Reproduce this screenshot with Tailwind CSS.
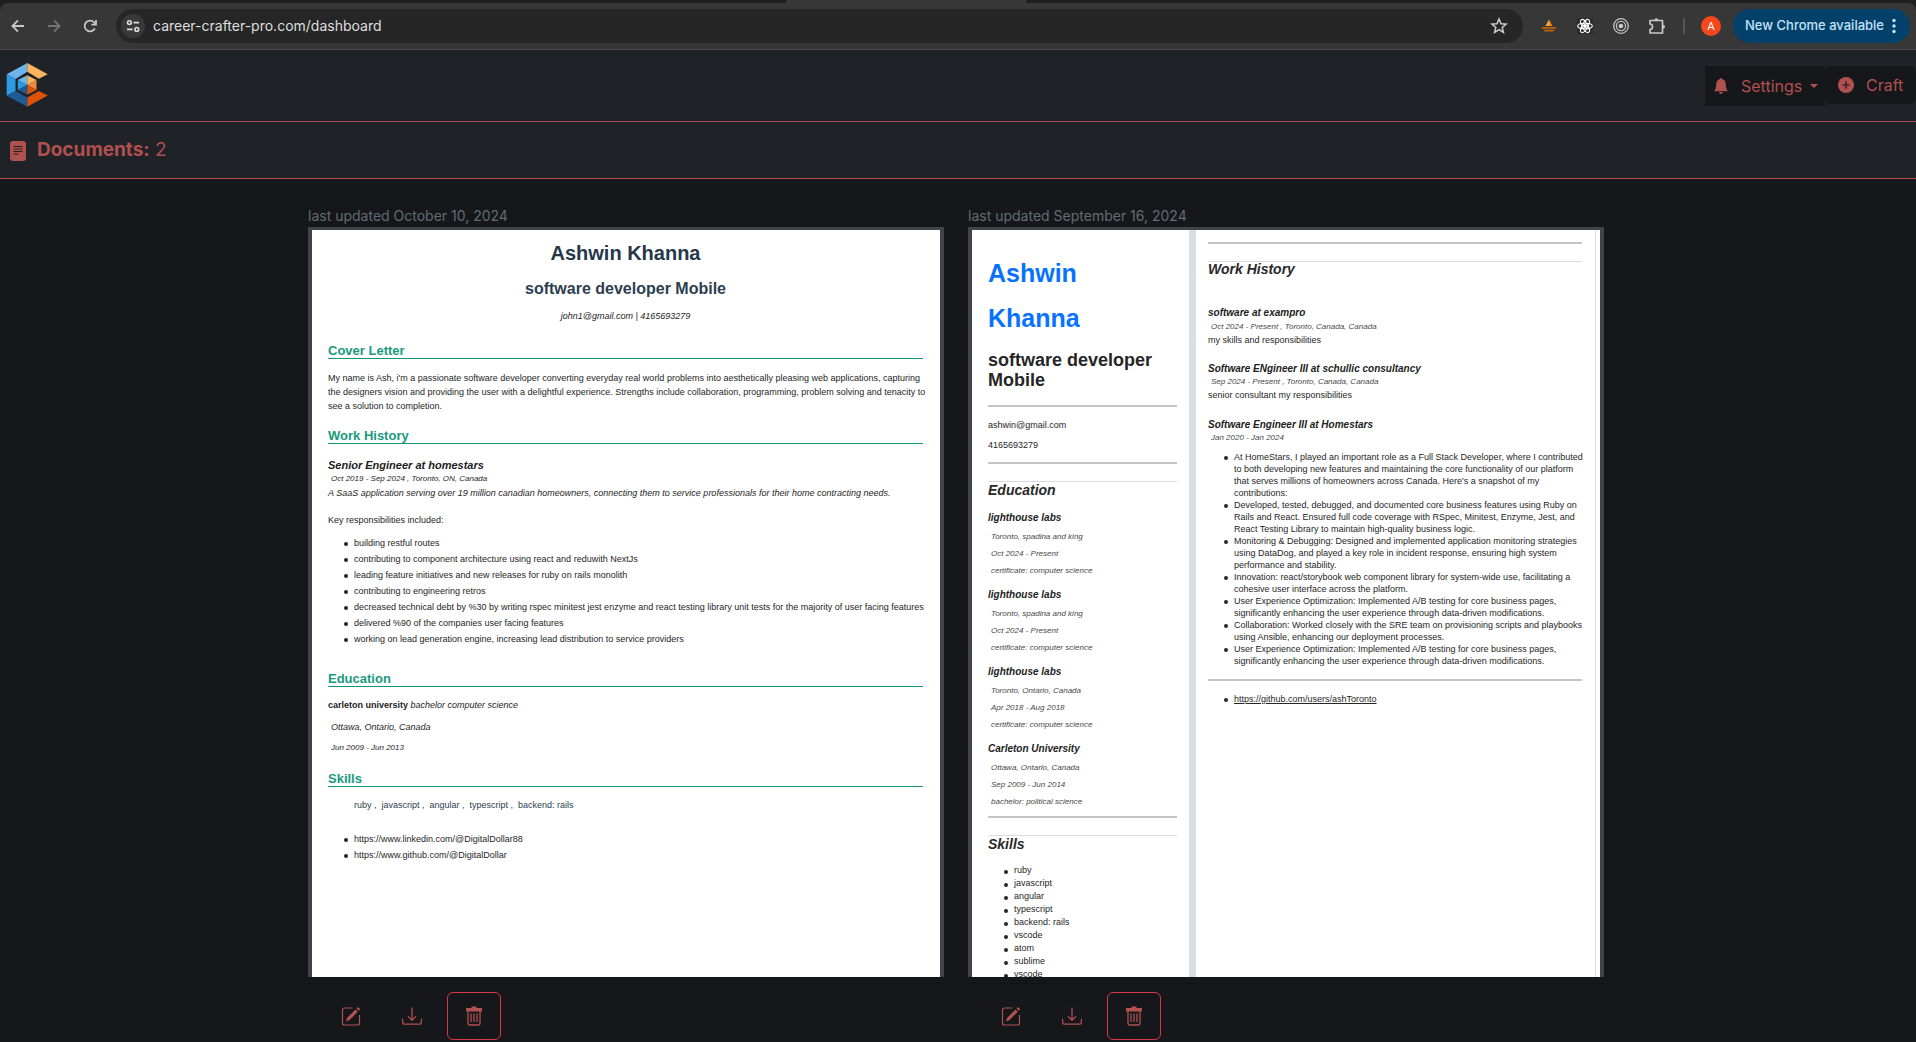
<!DOCTYPE html>
<html lang="en">
<head>
<meta charset="utf-8">
<meta name="viewport" content="width=device-width, initial-scale=1">
<title>Career Crafter Pro – Dashboard</title>
<script src="https://cdn.jsdelivr.net/npm/@tailwindcss/browser@4"></script>
</head>
<body class="min-h-screen bg-[#16171a] font-['Inter',sans-serif] text-[#b0504f]">

<!-- Browser toolbar -->
<div class="bg-[#1f1f1f]">
  <div class="flex h-[3px] justify-center"><div class="mr-[104px] h-[3px] w-[240px] bg-[#373737]"></div></div>
  <div class="flex h-[47px] items-center rounded-t-lg border-b border-[#474747] bg-[#373737] pr-[6px] pl-[8px]">
    <div class="flex gap-4 text-[#c7c7c7]">
      <button aria-label="Back" class="flex size-5 items-center justify-center"><svg class="size-[14px]" viewBox="0 0 14 14" fill="none" stroke="currentColor" stroke-width="1.8"><path d="M13 7H2M7 1.3 1.4 7 7 12.7"/></svg></button>
      <button aria-label="Forward" class="flex size-5 items-center justify-center text-[#737373]"><svg class="size-[14px]" viewBox="0 0 14 14" fill="none" stroke="currentColor" stroke-width="1.8"><path d="M1 7h11M7 1.3 12.6 7 7 12.7"/></svg></button>
      <button aria-label="Reload" class="flex size-5 items-center justify-center"><svg class="size-[14px]" viewBox="0 0 14 14" fill="none" stroke="currentColor" stroke-width="1.8"><path d="M11.9 9.3A5.4 5.4 0 1 1 10.9 3.2L12.6 5"/><path d="M13 1v4.6H8.4"/></svg></button>
    </div>
    <div class="ml-4 flex h-[34px] flex-1 items-center rounded-full bg-[#262626] pr-[14px] pl-[5px]">
      <button aria-label="Site information" class="flex size-6 items-center justify-center rounded-full bg-[#393939] text-[#dcdcdc]"><svg class="size-[14px]" viewBox="0 0 14 14" fill="none" stroke="currentColor" stroke-width="1.6"><circle cx="3.4" cy="3.6" r="1.9"/><path d="M7.5 3.6H13M1 10.4h5.5"/><circle cx="10.8" cy="10.4" r="1.9"/></svg></button>
      <input aria-label="Address" value="career-crafter-pro.com/dashboard" class="ml-2 min-w-0 flex-1 bg-transparent text-sm text-[#dedede] outline-none">
      <button aria-label="Bookmark this tab" class="text-[#cfcfcf]"><svg class="size-5" viewBox="0 0 20 20" fill="none" stroke="currentColor" stroke-width="1.5"><path d="m10 3 2 4.7 5.1.4-3.9 3.3 1.2 5L10 13.7l-4.4 2.7 1.2-5L2.900 8.100l5.100-.4z"/></svg></button>
    </div>
    <div class="ml-4 flex items-center gap-4">
      <button aria-label="Sailing extension" class="flex size-5 items-center justify-center"><svg class="size-4" viewBox="0 0 16 16"><path d="M8 1.500v6.500H4.500z" fill="#f7a83e"/><path d="M8 1.500v6.500h3.500z" fill="#ee8a18"/><path d="M.5 9h15l-.5 1.800H1zM2.500 11.800h11l-.8 1.700H3.300z" fill="#b8610f"/></svg></button>
      <button aria-label="React developer tools" class="flex size-5 items-center justify-center"><svg class="size-4 bg-[#2c2c2c]" viewBox="0 0 16 16" fill="none" stroke="#fff" stroke-width="1.100"><ellipse cx="8" cy="8" rx="7.300" ry="2.800"/><ellipse cx="8" cy="8" rx="7.300" ry="2.800" transform="rotate(60 8 8)"/><ellipse cx="8" cy="8" rx="7.300" ry="2.800" transform="rotate(120 8 8)"/><circle cx="8" cy="8" r="1.400" fill="#fff"/></svg></button>
      <button aria-label="Target extension" class="flex size-5 items-center justify-center"><svg class="size-4" viewBox="0 0 16 16" fill="none" stroke="#c2c2c2" stroke-width="1.300"><circle cx="8" cy="8" r="7.300"/><circle cx="8" cy="8" r="4.600"/><circle cx="8" cy="8" r="1.700" fill="#d6d6d6"/></svg></button>
      <button aria-label="Extensions" class="flex size-5 items-center justify-center"><svg class="size-[18px]" viewBox="0 0 18 18"><path d="M2 3.500h12.500v12.500H2v-3.500c3.400-.3 3.400-5.200 0-5.500z" fill="none" stroke="#c7c7c7" stroke-width="1.700" stroke-linejoin="round"/><path d="M6.300 3.300a2 2 0 0 1 4 0zM15 7.700a2 2 0 0 1 0 4z" fill="#c7c7c7"/></svg></button>
    </div>
    <div class="ml-4 h-4 w-[2px] bg-[#565656]"></div>
    <button aria-label="Profile" class="ml-4 flex size-5 items-center justify-center rounded-full bg-[#f4471b] text-[11px] text-white">A</button>
    <button class="ml-3 flex h-[34px] items-center gap-2 rounded-full bg-[#03416b] pr-[14px] pl-3 text-[13px] font-medium text-[#c2e4fb]">New Chrome available
      <svg class="h-4 w-1" viewBox="0 0 4 16" fill="currentColor"><circle cx="2" cy="2.500" r="1.700"/><circle cx="2" cy="8" r="1.700"/><circle cx="2" cy="13.500" r="1.700"/></svg></button>
  </div>
</div>

<!-- App navigation -->
<header class="flex h-[72px] items-start justify-between border-b border-[#a84c4c] bg-[#1f2226]">
  <a href="#" aria-label="Career Crafter home" class="mt-[13px] ml-[6px]"><svg class="h-11 w-[42px]" viewBox="18 188 126 134"><path d="m82 188-63 34 27 15 36-22z" fill="#6cb5e9"/><path d="m82 188 62 34-27 14-35-21z" fill="#fbb55e"/><path d="m19 222 27 15v36l-27 15z" fill="#2d9be2"/><path d="m19 288 27-15 36 20v28z" fill="#1d5b97"/><path d="m82 293 35-20 27 14-62 34z" fill="#dc5307"/><path d="M82 225v30l-29-15z" fill="#6cb5e9"/><path d="m82 225 28 15-28 15z" fill="#fbb55e"/><path d="m53 240 29 15-29 15z" fill="#2d9be2"/><path d="m110 240v30l-28-15z" fill="#f0893c"/><path d="m53 270 29-15v30z" fill="#1d5b97"/><path d="m110 270-28-15v30z" fill="#dc5307"/></svg></a>
  <nav class="mt-4 flex items-start">
    <button class="flex h-10 w-[120px] items-center bg-[#16171a] pl-2">
      <svg class="size-4" viewBox="0 0 16 17" fill="currentColor"><path d="M8 0a1.200 1.200 0 0 1 1.200 1.100C11.700 1.700 13 3.700 13 6.200c0 4 1 6.400 2.300 7.800H.7C2 12.600 3 10.200 3 6.200c0-2.500 1.300-4.500 3.800-5.100A1.200 1.200 0 0 1 8 0zM6 14.900h4a2 2 0 0 1-4 0z"/></svg>
      <span class="ml-3 text-base">Settings</span>
      <svg class="ml-2 h-1 w-2" viewBox="0 0 8 4" fill="currentColor"><path d="M0 0h8L4 4z"/></svg>
    </button>
    <button class="flex h-[38px] w-[91px] items-center rounded-md bg-[#16171a] pl-[13px]">
      <svg class="size-4" viewBox="0 0 16 16"><circle cx="8" cy="8" r="8" fill="currentColor"/><path d="M8 4.300v7.400M4.300 8h7.400" stroke="#16171a" stroke-width="1.200"/></svg>
      <span class="ml-3 text-base">Craft</span>
    </button>
  </nav>
</header>

<div class="flex h-[57px] items-center border-b border-[#b8494d] bg-[#1f2226] pt-px pl-[10px]">
  <svg class="h-5 w-4" viewBox="0 0 16 20"><rect width="16" height="20" rx="3" fill="currentColor"/><path d="M3.500 5.500h9M3.500 8h9M3.500 10.500h9M3.500 13h5" stroke="#1f2226" stroke-width="1.100"/></svg>
  <h1 class="ml-[11px] text-[19px]"><strong class="font-bold">Documents:</strong> 2</h1>
</div>

<main class="pt-[26px] pr-1">
  <div class="mx-auto grid max-w-[1320px] grid-cols-2 gap-6 px-3">

    <!-- Document 1 -->
    <section>
      <p class="text-sm leading-[22px] text-[#646b72]">last updated October 10, 2024</p>
      <article class="h-[750px] overflow-hidden border-x-4 border-t-[3px] border-[#404347] bg-white pt-[11px] pr-[17px] pl-4 font-['Liberation_Sans',Arial,sans-serif] text-[9px] leading-[14px] text-[#262626]">
        <header class="text-center">
          <h2 class="text-xl leading-6 font-bold text-[#26374a]">Ashwin Khanna</h2>
          <p class="mt-[14px] text-base leading-5 font-bold text-[#2c3e50]">software developer Mobile</p>
          <p class="mt-[10px] italic">john1@gmail.com | 4165693279</p>
        </header>
        <h3 class="mt-5 border-b border-[#16967a] text-[13px] leading-[15px] font-bold text-[#189a7e]">Cover Letter</h3>
        <p class="mt-3 -mr-2">My name is Ash, i'm a passionate software developer converting everyday real world problems into aesthetically pleasing web applications, capturing the designers vision and providing the user with a delightful experience. Strengths include collaboration, programming, problem solving and tenacity to see a solution to completion.</p>
        <h3 class="mt-[15px] border-b border-[#16967a] text-[13px] leading-[15px] font-bold text-[#189a7e]">Work History</h3>
        <h4 class="mt-[14px] text-[11px] leading-[14px] font-bold text-[#222] italic">Senior Engineer at homestars</h4>
        <p class="mt-px pl-[3px] text-[8px] leading-3 italic">Oct 2019 - Sep 2024 , Toronto, ON, Canada</p>
        <p class="mt-px italic">A SaaS application serving over 19 million canadian homeowners, connecting them to service professionals for their home contracting needs.</p>
        <p class="mt-[13px]">Key responsibilities included:</p>
        <ul class="mt-2 pl-[26px] leading-4 whitespace-nowrap [&>li]:relative [&>li]:before:absolute [&>li]:before:top-[7px] [&>li]:before:-left-[10px] [&>li]:before:size-1 [&>li]:before:rounded-full [&>li]:before:bg-[#262626]">
          <li>building restful routes</li>
          <li>contributing to component architecture using react and reduwith NextJs</li>
          <li>leading feature initiatives and new releases for ruby on rails monolith</li>
          <li>contributing to engineering retros</li>
          <li>decreased technical debt by %30 by writing rspec minitest jest enzyme and react testing library unit tests for the majority of user facing features</li>
          <li>delivered %90 of the companies user facing features</li>
          <li>working on lead generation engine, increasing lead distribution to service providers</li>
        </ul>
        <h3 class="mt-6 border-b border-[#16967a] text-[13px] leading-[15px] font-bold text-[#189a7e]">Education</h3>
        <p class="mt-[11px]"><b class="text-[#222]">carleton university</b> <i>bachelor computer science</i></p>
        <p class="mt-2 pl-[3px] italic">Ottawa, Ontario, Canada</p>
        <p class="mt-2 pl-[3px] text-[8px] leading-3 italic">Jun 2009 - Jun 2013</p>
        <h3 class="mt-[17px] border-b border-[#16967a] text-[13px] leading-[15px] font-bold text-[#189a7e]">Skills</h3>
        <p class="mt-[11px] flex gap-[5px] pl-[26px] text-[#2c3e50]"><span>ruby ,</span><span>javascript ,</span><span>angular ,</span><span>typescript ,</span><span>backend: rails</span></p>
        <ul class="mt-[19px] pl-[26px] leading-4 [&>li]:relative [&>li]:before:absolute [&>li]:before:top-[7px] [&>li]:before:-left-[10px] [&>li]:before:size-1 [&>li]:before:rounded-full [&>li]:before:bg-[#262626]">
          <li><a href="#">https://www.linkedin.com/@DigitalDollar88</a></li>
          <li><a href="#">https://www.github.com/@DigitalDollar</a></li>
        </ul>
      </article>
      <footer class="mt-[6px] flex gap-2 border-t border-[#121316] pt-2 pb-[2px] pl-[15px]">
        <button aria-label="Edit" class="flex h-12 w-[54px] items-center justify-center rounded-md pb-px pl-[2px]"><svg class="size-5" viewBox="0 0 20 20" fill="none" stroke="currentColor"><path d="M11.500 2H3.500A2 2 0 0 0 1.500 4v13a2 2 0 0 0 2 2h13a2 2 0 0 0 2-2V9" stroke-width="1.200"/><path d="M5 15.500 6 12l8.500-8.500 2.300 2.300L8.300 14.300z" fill="currentColor" stroke="none"/><path d="m15.500 2.500 1.500-1.500 2.300 2.300-1.500 1.500z" fill="currentColor" stroke="none"/></svg></button>
        <button aria-label="Download" class="flex h-12 w-[54px] items-center justify-center rounded-md pb-px"><svg class="size-5" viewBox="0 0 16 16" fill="currentColor"><path d="M.5 9.900a.5.5 0 0 1 .5.5v2.500a1 1 0 0 0 1 1h12a1 1 0 0 0 1-1v-2.500a.5.5 0 0 1 1 0v2.500a2 2 0 0 1-2 2H2a2 2 0 0 1-2-2v-2.500a.5.5 0 0 1 .5-.5"/><path d="M7.646 11.854a.5.5 0 0 0 .708 0l3-3a.5.5 0 0 0-.708-.708L8.500 10.293V1.500a.5.5 0 0 0-1 0v8.793L5.354 8.146a.5.5 0 1 0-.708.708z"/></svg></button>
        <button aria-label="Delete" class="flex h-12 w-[54px] items-center justify-center rounded-md border border-[#dc3545] pb-px"><svg class="h-5 w-4" viewBox="0 0 16 20" fill="none" stroke="currentColor"><path d="M5.500 .5h5V2H16v3.500H0V2h5.500z" fill="currentColor" stroke="none"/><path d="M2 5v12a2 2 0 0 0 2 2h8a2 2 0 0 0 2-2V5" stroke-width="1.300"/><path d="M5 7.500v8.500M8 7.500v8.500M11 7.500v8.500" stroke-width="1.300"/></svg></button>
      </footer>
    </section>

    <!-- Document 2 -->
    <section>
      <p class="text-sm leading-[22px] text-[#646b72]">last updated September 16, 2024</p>
      <article class="flex h-[750px] overflow-hidden border-x-4 border-t-[3px] border-[#404347] bg-white pr-1 font-['Liberation_Sans',Arial,sans-serif] text-[9px] leading-[14px] text-[#262626]">
        <div class="w-[224px] shrink-0 border-r-[7px] border-[#d8dee2] pt-[21px] pr-3 pl-4">
          <h2 class="text-[25px] leading-[45px] font-bold text-[#0772ff]">Ashwin<br>Khanna</h2>
          <p class="mt-[9px] text-lg leading-5 font-bold">software developer Mobile</p>
          <hr class="mt-[15px] border-t-2 border-[#c4c4c4]">
          <p class="mt-[11px]">ashwin@gmail.com</p>
          <p class="mt-[6px]">4165693279</p>
          <hr class="mt-[10px] border-t-2 border-[#c4c4c4]">
          <h3 class="mt-[17px] border-t border-[#d6dde1] text-sm leading-4 font-bold text-[#292929] italic">Education</h3>
          <div class="mt-[14px] flex flex-col gap-3">
            <div>
              <h4 class="text-[10px] leading-3 font-bold text-[#222] italic">lighthouse labs</h4>
              <div class="mt-[7px] flex flex-col gap-[5px] pl-[3px] text-[8px] leading-3 text-[#484848] italic"><p>Toronto, spadina and king</p><p>Oct 2024 - Present</p><p>certificate: computer science</p></div>
            </div>
            <div>
              <h4 class="text-[10px] leading-3 font-bold text-[#222] italic">lighthouse labs</h4>
              <div class="mt-[7px] flex flex-col gap-[5px] pl-[3px] text-[8px] leading-3 text-[#484848] italic"><p>Toronto, spadina and king</p><p>Oct 2024 - Present</p><p>certificate: computer science</p></div>
            </div>
            <div>
              <h4 class="text-[10px] leading-3 font-bold text-[#222] italic">lighthouse labs</h4>
              <div class="mt-[7px] flex flex-col gap-[5px] pl-[3px] text-[8px] leading-3 text-[#484848] italic"><p>Toronto, Ontario, Canada</p><p>Apr 2018 - Aug 2018</p><p>certificate: computer science</p></div>
            </div>
            <div>
              <h4 class="text-[10px] leading-3 font-bold text-[#222] italic">Carleton University</h4>
              <div class="mt-[7px] flex flex-col gap-[5px] pl-[3px] text-[8px] leading-3 text-[#484848] italic"><p>Ottawa, Ontario, Canada</p><p>Sep 2009 - Jun 2014</p><p>bachelor: political science</p></div>
            </div>
          </div>
          <hr class="mt-2 border-t-2 border-[#c4c4c4]">
          <h3 class="mt-[17px] border-t border-[#dcdcdc] text-sm leading-4 font-bold text-[#292929] italic">Skills</h3>
          <ul class="mt-3 pl-[26px] leading-[13px] [&>li]:relative [&>li]:before:absolute [&>li]:before:top-[6px] [&>li]:before:-left-[10px] [&>li]:before:size-1 [&>li]:before:rounded-full [&>li]:before:bg-[#262626]">
            <li>ruby</li><li>javascript</li><li>angular</li><li>typescript</li><li>backend: rails</li><li>vscode</li><li>atom</li><li>sublime</li><li>vscode</li>
          </ul>
        </div>
        <div class="flex-1 border-r border-[#d9d9d9] pt-3 pr-[13px] pl-3">
          <hr class="border-t-2 border-[#c4c4c4]">
          <h3 class="mt-[17px] border-t border-[#dcdcdc] text-sm leading-[14px] font-bold text-[#292929] italic">Work History</h3>
          <div class="mt-[31px] flex flex-col gap-[15px]">
            <div>
              <h4 class="text-[10px] leading-3 font-bold text-[#222] italic">software at exampro</h4>
              <p class="mt-[2px] pl-[3px] text-[8px] leading-3 text-[#484848] italic">Oct 2024 - Present , Toronto, Canada, Canada</p>
              <p>my skills and responsibilities</p>
            </div>
            <div class="pt-px">
              <h4 class="text-[10px] leading-3 font-bold text-[#222] italic">Software ENgineer III at schullic consultancy</h4>
              <p class="mt-px pl-[3px] text-[8px] leading-3 text-[#484848] italic">Sep 2024 - Present , Toronto, Canada, Canada</p>
              <p>senior consultant my responsibilities</p>
            </div>
            <div class="pt-[2px]">
              <h4 class="text-[10px] leading-3 font-bold text-[#222] italic">Software Engineer III at Homestars</h4>
              <p class="mt-px pl-[3px] text-[8px] leading-3 text-[#484848] italic">Jan 2020 - Jan 2024</p>
              <ul class="mt-[7px] -mr-1 pl-[26px] leading-3 [&>li]:relative [&>li]:before:absolute [&>li]:before:top-[5px] [&>li]:before:-left-[10px] [&>li]:before:size-1 [&>li]:before:rounded-full [&>li]:before:bg-[#262626]">
                <li>At HomeStars, I played an important role as a Full Stack Developer, where I contributed to both developing new features and maintaining the core functionality of our platform that serves millions of homeowners across Canada. Here's a snapshot of my contributions:</li>
                <li>Developed, tested, debugged, and documented core business features using Ruby on Rails and React. Ensured full code coverage with RSpec, Minitest, Enzyme, Jest, and React Testing Library to maintain high-quality business logic.</li>
                <li>Monitoring &amp; Debugging: Designed and implemented application monitoring strategies using DataDog, and played a key role in incident response, ensuring high system performance and stability.</li>
                <li>Innovation: react/storybook web component library for system-wide use, facilitating a cohesive user interface across the platform.</li>
                <li>User Experience Optimization: Implemented A/B testing for core business pages, significantly enhancing the user experience through data-driven modifications.</li>
                <li>Collaboration: Worked closely with the SRE team on provisioning scripts and playbooks using Ansible, enhancing our deployment processes.</li>
                <li>User Experience Optimization: Implemented A/B testing for core business pages, significantly enhancing the user experience through data-driven modifications.</li>
              </ul>
            </div>
          </div>
          <hr class="mt-3 border-t-2 border-[#c4c4c4]">
          <ul class="mt-[11px] pl-[26px] [&>li]:relative [&>li]:before:absolute [&>li]:before:top-[6px] [&>li]:before:-left-[10px] [&>li]:before:size-1 [&>li]:before:rounded-full [&>li]:before:bg-[#262626]"><li><a href="#" class="underline">https://github.com/users/ashToronto</a></li></ul>
        </div>
      </article>
      <footer class="mt-[6px] flex gap-2 border-t border-[#121316] pt-2 pb-[2px] pl-[15px]">
        <button aria-label="Edit" class="flex h-12 w-[54px] items-center justify-center rounded-md pb-px pl-[2px]"><svg class="size-5" viewBox="0 0 20 20" fill="none" stroke="currentColor"><path d="M11.500 2H3.500A2 2 0 0 0 1.500 4v13a2 2 0 0 0 2 2h13a2 2 0 0 0 2-2V9" stroke-width="1.200"/><path d="M5 15.500 6 12l8.500-8.500 2.300 2.300L8.300 14.300z" fill="currentColor" stroke="none"/><path d="m15.500 2.500 1.500-1.500 2.300 2.300-1.500 1.500z" fill="currentColor" stroke="none"/></svg></button>
        <button aria-label="Download" class="flex h-12 w-[54px] items-center justify-center rounded-md pb-px"><svg class="size-5" viewBox="0 0 16 16" fill="currentColor"><path d="M.5 9.900a.5.5 0 0 1 .5.5v2.500a1 1 0 0 0 1 1h12a1 1 0 0 0 1-1v-2.500a.5.5 0 0 1 1 0v2.500a2 2 0 0 1-2 2H2a2 2 0 0 1-2-2v-2.500a.5.5 0 0 1 .5-.5"/><path d="M7.646 11.854a.5.5 0 0 0 .708 0l3-3a.5.5 0 0 0-.708-.708L8.500 10.293V1.500a.5.5 0 0 0-1 0v8.793L5.354 8.146a.5.5 0 1 0-.708.708z"/></svg></button>
        <button aria-label="Delete" class="flex h-12 w-[54px] items-center justify-center rounded-md border border-[#dc3545] pb-px"><svg class="h-5 w-4" viewBox="0 0 16 20" fill="none" stroke="currentColor"><path d="M5.500 .5h5V2H16v3.500H0V2h5.500z" fill="currentColor" stroke="none"/><path d="M2 5v12a2 2 0 0 0 2 2h8a2 2 0 0 0 2-2V5" stroke-width="1.300"/><path d="M5 7.500v8.500M8 7.500v8.500M11 7.500v8.500" stroke-width="1.300"/></svg></button>
      </footer>
    </section>
  </div>
</main>
</body>
</html>
